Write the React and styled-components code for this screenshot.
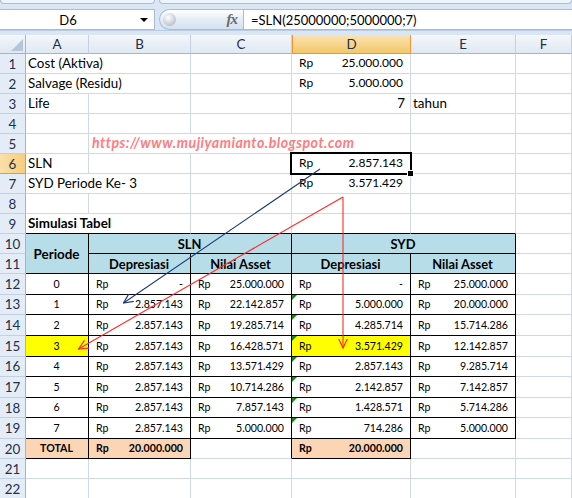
import React from "react";
import styled, { createGlobalStyle } from "styled-components";

const GRID = "#d0d7e5";
const INK = "#000";
const HEAD_BLUE = "#b7dee8";
const PEACH = "#fcd5b4";
const YELLOW = "#ffff00";

// font sizes: Lato scaled to the Calibri widths of the sheet
const LABEL = 13.4;
const TOPNUM = 12;
const NUM = 10.6;

const GlobalStyle = createGlobalStyle`
  html, body { margin: 0; padding: 0; background: #fff; overflow: hidden; }
  body { font-family: Lato, "Liberation Sans", sans-serif; }
`;

const Page = styled.div`
  position: relative;
  width: 572px;
  height: 498px;
  overflow: hidden;
  background: #fff;
`;

/* ribbon bottom + formula bar */
const TopStrip = styled.div`
  height: 9px;
  display: flex;
  gap: 4px;
  background: #dbe6f4;
  align-items: flex-start;
`;
const RibbonTab = styled.div`
  height: 3px;
  width: ${(p) => (p.$w ? `${p.$w}px` : "auto")};
  flex: ${(p) => (p.$w ? "none" : "1")};
  background: #eef4fb;
  border: 1px solid #a9bfd9;
  border-top: none;
  border-radius: 0 0 4px 4px;
`;

const FormulaBar = styled.div`
  height: 21px;
  display: flex;
  align-items: stretch;
  background: #dbe6f4;
`;
const NameBox = styled.div`
  width: 155px;
  position: relative;
  background: #fff;
  border: 1px solid #a7bcd7;
  border-left: none;
  box-sizing: border-box;
  display: flex;
  align-items: center;
  justify-content: center;
  padding-right: 18px;
  font-size: 13px;
  color: #000;
`;
const Caret = styled.span`
  position: absolute;
  right: 6px;
  top: 8px;
  border-left: 4px solid transparent;
  border-right: 4px solid transparent;
  border-top: 4px solid #000;
`;
const FxCapsule = styled.div`
  width: 84px;
  margin-left: 4px;
  box-sizing: border-box;
  border: 1px solid #a7bcd7;
  border-right: none;
  border-radius: 11px 0 0 11px;
  background: linear-gradient(#ffffff, #e3ebf5 55%, #d6e1ef);
  display: flex;
  align-items: center;
  justify-content: space-between;
  padding: 0 6px 0 3px;
`;
const Knob = styled.span`
  width: 13px;
  height: 13px;
  border-radius: 50%;
  background: radial-gradient(circle at 40% 35%, #ffffff, #c9ced6 60%, #9aa3ae);
`;
const Fx = styled.span`
  font-family: "Liberation Serif", serif;
  font-style: italic;
  font-weight: bold;
  font-size: 15px;
  color: #6a6a6a;
  letter-spacing: -1px;
`;
const FormulaInput = styled.div`
  flex: 1;
  background: #fff;
  border: 1px solid #a7bcd7;
  border-right: none;
  display: flex;
  align-items: center;
  padding-left: 7px;
  font-size: 13px;
  white-space: nowrap;
`;
const Band = styled.div`
  height: 5px;
  background: #dbe6f4;
  border-top: 1px solid #b9cbe0;
  box-sizing: border-box;
`;

/* sheet grid */
const Sheet = styled.div`
  display: grid;
  grid-template-columns: 26px 63px 102px 101px 119px 105px 1fr;
  grid-template-rows: 19px repeat(11, 20px) repeat(8, 20.625px) 20px 20px 20px;
  color: #000;
`;

const Corner = styled.div`
  position: relative;
  background: linear-gradient(#f3f7fb, #dfe7f2);
  border-right: 1px solid #9eb6ce;
  border-bottom: 1px solid #9eb6ce;
  box-sizing: border-box;
  &::after {
    content: "";
    position: absolute;
    right: 2px;
    bottom: 2px;
    border-left: 12px solid transparent;
    border-bottom: 12px solid #b6c6da;
  }
`;
const ColHead = styled.div`
  display: flex;
  align-items: center;
  justify-content: center;
  box-sizing: border-box;
  font-size: 13.4px;
  color: #1f2f48;
  background: ${(p) =>
    p.$active
      ? "linear-gradient(#fbe3b3, #f2c868)"
      : "linear-gradient(#f4f7fb, #e0e8f3)"};
  border-right: 1px solid ${(p) => (p.$active ? "#f29536" : "#c3d0e1")};
  border-left: ${(p) => (p.$active ? "1px solid #f29536" : "none")};
  border-bottom: 1px solid ${(p) => (p.$active ? "#f29536" : "#9eb6ce")};
`;
const RowHead = styled.div`
  display: flex;
  align-items: center;
  justify-content: center;
  box-sizing: border-box;
  font-size: 13.4px;
  color: #1f2f48;
  background: ${(p) =>
    p.$active ? "linear-gradient(90deg, #fbe0aa, #f6cd7c)" : "#e4ecf7"};
  border-right: 1px solid ${(p) => (p.$active ? "#f29536" : "#9eb6ce")};
  border-bottom: 1px solid ${(p) => (p.$active ? "#f29536" : "#c3d0e1")};
`;

const Cell = styled.div`
  position: relative;
  box-sizing: border-box;
  min-width: 0;
  display: flex;
  align-items: ${(p) => (p.$center ? "center" : "flex-end")};
  justify-content: ${(p) => p.$justify || "flex-start"};
  grid-column: span ${(p) => p.$span || 1};
  grid-row: span ${(p) => p.$rows || 1};
  padding: 0 ${(p) => (p.$money ? "7px" : "3px")} ${(p) => (p.$center ? 0 : "2px")}
    ${(p) => (p.$money ? "7px" : "2px")};
  line-height: 16px;
  white-space: nowrap;
  background: ${(p) => p.$bg || "transparent"};
  border-right: 1px solid ${(p) => p.$rb || GRID};
  border-bottom: 1px solid ${(p) => p.$bb || GRID};
  font-weight: ${(p) => (p.$bold ? 700 : 400)};
  font-size: ${(p) => p.$fs || LABEL}px;
  ${(p) =>
    p.$sel &&
    `
    &::after {
      content: "";
      position: absolute;
      left: -2px; top: -2px; right: -2px; bottom: -2px;
      border: 2.5px solid #000;
      z-index: 2;
    }
    &::before {
      content: "";
      position: absolute;
      right: -4px; bottom: -4px;
      width: 5px; height: 5px;
      background: #000;
      border: 1px solid #fff;
      z-index: 3;
    }
  `}
`;

const Watermark = styled.span`
  color: #ff7c80;
  font-weight: 700;
  font-style: italic;
  font-size: 14.2px;
  letter-spacing: 0.5px;
  padding-left: 1px;
`;

const Tri = styled.span`
  position: absolute;
  left: 0;
  top: 0;
  border-top: 5px solid #138a13;
  border-right: 5px solid transparent;
`;

const ArrowLayer = styled.svg`
  position: absolute;
  left: 0;
  top: 0;
  pointer-events: none;
  z-index: 5;
`;

const Money = ({ v, ...rest }) => (
  <Cell $money $justify="space-between" $fs={NUM} {...rest}>
    {rest.$tri && <Tri />}
    <span>Rp</span>
    <span>{v}</span>
  </Cell>
);

const Head = (props) => (
  <Cell $center $justify="center" $bold $fs={12.9} $bg={HEAD_BLUE} $rb={INK} $bb={INK} {...props} />
);

const data = [
  ["0", "-", "25.000.000", "-", "25.000.000"],
  ["1", "2.857.143", "22.142.857", "5.000.000", "20.000.000"],
  ["2", "2.857.143", "19.285.714", "4.285.714", "15.714.286"],
  ["3", "2.857.143", "16.428.571", "3.571.429", "12.142.857"],
  ["4", "2.857.143", "13.571.429", "2.857.143", "9.285.714"],
  ["5", "2.857.143", "10.714.286", "2.142.857", "7.142.857"],
  ["6", "2.857.143", "7.857.143", "1.428.571", "5.714.286"],
  ["7", "2.857.143", "5.000.000", "714.286", "5.000.000"],
];

const cols = ["A", "B", "C", "D", "E", "F"];

export default function App() {
  return (
    <Page>
      <GlobalStyle />
      <TopStrip>
        <RibbonTab $w={153} />
        <RibbonTab />
      </TopStrip>
      <FormulaBar>
        <NameBox>
          D6
          <Caret />
        </NameBox>
        <FxCapsule>
          <Knob />
          <Fx>fx</Fx>
        </FxCapsule>
        <FormulaInput>=SLN(25000000;5000000;7)</FormulaInput>
      </FormulaBar>
      <Band />
      <Sheet>
        <Corner />
        {cols.map((c) => (
          <ColHead key={c} $active={c === "D"}>
            {c}
          </ColHead>
        ))}

        {/* 1 */}
        <RowHead>1</RowHead>
        <Cell $span={2}>Cost (Aktiva)</Cell>
        <Cell />
        <Money v="25.000.000" $fs={TOPNUM} />
        <Cell />
        <Cell />

        {/* 2 */}
        <RowHead>2</RowHead>
        <Cell $span={2}>Salvage (Residu)</Cell>
        <Cell />
        <Money v="5.000.000" $fs={TOPNUM} />
        <Cell />
        <Cell />

        {/* 3 */}
        <RowHead>3</RowHead>
        <Cell>Life</Cell>
        <Cell />
        <Cell />
        <Cell $justify="flex-end" style={{ paddingRight: 5 }}>
          7
        </Cell>
        <Cell>tahun</Cell>
        <Cell />

        {/* 4 */}
        <RowHead>4</RowHead>
        {cols.map((c) => (
          <Cell key={c} />
        ))}

        {/* 5 */}
        <RowHead>5</RowHead>
        <Cell />
        <Cell $span={3}>
          <Watermark>https://www.mujiyamianto.blogspot.com</Watermark>
        </Cell>
        <Cell />
        <Cell />

        {/* 6 */}
        <RowHead $active>6</RowHead>
        <Cell>SLN</Cell>
        <Cell />
        <Cell />
        <Money v="2.857.143" $fs={TOPNUM} $sel />
        <Cell />
        <Cell />

        {/* 7 */}
        <RowHead>7</RowHead>
        <Cell $span={2}>SYD Periode Ke- 3</Cell>
        <Cell />
        <Money v="3.571.429" $fs={TOPNUM} />
        <Cell />
        <Cell />

        {/* 8 */}
        <RowHead>8</RowHead>
        {cols.map((c) => (
          <Cell key={c} />
        ))}

        {/* 9 */}
        <RowHead>9</RowHead>
        <Cell $span={2} $bold $bb={INK}>
          Simulasi Tabel
        </Cell>
        <Cell $bb={INK} />
        <Cell $bb={INK} />
        <Cell $bb={INK} />
        <Cell />

        {/* 10 - 11 */}
        <RowHead>10</RowHead>
        <Head $rows={2} $fs={13.4}>Periode</Head>
        <Head $span={2}>SLN</Head>
        <Head $span={2}>SYD</Head>
        <Cell />
        <RowHead>11</RowHead>
        <Head>Depresiasi</Head>
        <Head>Nilai Asset</Head>
        <Head>Depresiasi</Head>
        <Head>Nilai Asset</Head>
        <Cell />

        {/* 12 - 19 */}
        {data.map((r, i) => {
          const hot = r[0] === "3";
          return (
            <React.Fragment key={r[0]}>
              <RowHead>{12 + i}</RowHead>
              <Cell $justify="center" $fs={NUM} $rb={INK} $bb={INK} $bg={hot ? YELLOW : undefined}>
                {r[0]}
              </Cell>
              <Money v={r[1]} $rb={INK} $bb={INK} />
              <Money v={r[2]} $rb={INK} $bb={INK} />
              <Money v={r[3]} $rb={INK} $bb={INK} $bg={hot ? YELLOW : undefined} $tri={i > 0} />
              <Money v={r[4]} $rb={INK} $bb={INK} />
              <Cell />
            </React.Fragment>
          );
        })}

        {/* 20 */}
        <RowHead>20</RowHead>
        <Cell $justify="center" $bold $fs={NUM} $bg={PEACH} $rb={INK} $bb={INK}>
          TOTAL
        </Cell>
        <Money v="20.000.000" $bold $bg={PEACH} $rb={INK} $bb={INK} />
        <Cell $rb={INK} />
        <Money v="20.000.000" $bold $bg={PEACH} $rb={INK} $bb={INK} />
        <Cell />
        <Cell />

        {/* 21 - 22 */}
        {[21, 22].map((n) => (
          <React.Fragment key={n}>
            <RowHead>{n}</RowHead>
            {cols.map((c) => (
              <Cell key={c} />
            ))}
          </React.Fragment>
        ))}
      </Sheet>

      <ArrowLayer width="572" height="498" viewBox="0 0 572 498">
        <defs>
          <marker id="headBlue" viewBox="0 0 10 10" refX="9.5" refY="5" markerWidth="10" markerHeight="10" orient="auto" markerUnits="userSpaceOnUse">
            <path d="M0,0.5 L9.5,5 L0,9.5" fill="none" stroke="#1f3a78" strokeWidth="1.2" />
          </marker>
          <marker id="headRed" viewBox="0 0 10 10" refX="9.5" refY="5" markerWidth="10" markerHeight="10" orient="auto" markerUnits="userSpaceOnUse">
            <path d="M0,0.5 L9.5,5 L0,9.5" fill="none" stroke="#ff2a2a" strokeWidth="1.2" />
          </marker>
        </defs>
        <line x1="320" y1="169" x2="123.5" y2="303" stroke="#1f3a78" strokeWidth="1.1" markerEnd="url(#headBlue)" />
        <line x1="343" y1="197" x2="78.5" y2="349" stroke="#ff2a2a" strokeWidth="1.1" markerEnd="url(#headRed)" />
        <line x1="343" y1="197" x2="343" y2="348" stroke="#ff2a2a" strokeWidth="1.1" markerEnd="url(#headRed)" />
      </ArrowLayer>
    </Page>
  );
}
